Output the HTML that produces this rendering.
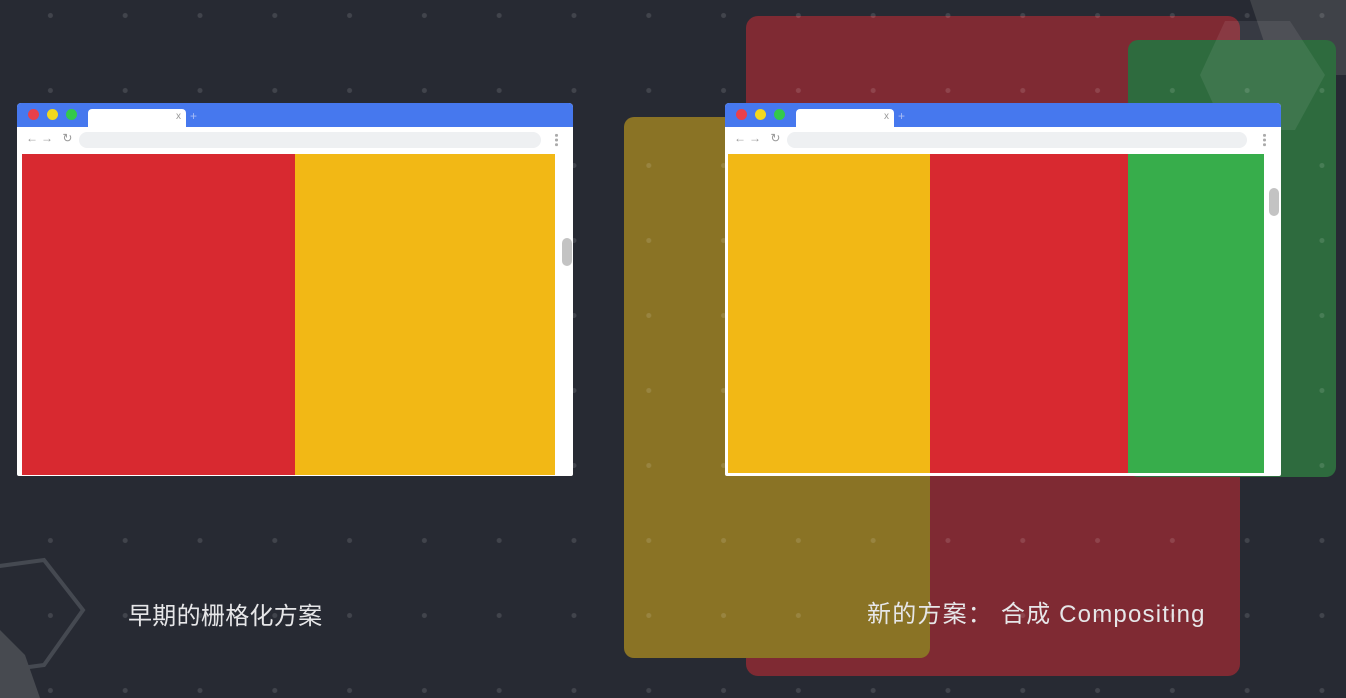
<!DOCTYPE html>
<html><head><meta charset="utf-8"><style>
*{margin:0;padding:0;box-sizing:border-box}
body{width:1346px;height:698px;overflow:hidden;background:#272a33;position:relative;font-family:"Liberation Sans","Noto Sans CJK SC",sans-serif}
.abs{position:absolute}
.dots{position:absolute;inset:0;background-image:radial-gradient(circle,rgba(255,255,255,0.12) 2.2px,transparent 2.8px);background-size:74.8px 75px;background-position:13px -22px}
.br{position:absolute;background:#fff;border-radius:4px 4px 2px 2px;overflow:hidden}
.tb{position:absolute;left:0;right:0;top:0;height:24px;background:#4678ee}
.dot{position:absolute;top:6px;width:11px;height:11px;border-radius:50%}
.tab{position:absolute;left:71px;top:6px;width:98px;height:20px;background:#fff;border-radius:4px 4px 0 0}
.tab span{position:absolute;right:5px;top:2px;font-size:10px;color:#999}
.plus{position:absolute;left:173px;top:6px;font-size:12px;color:#a8bdf5}
.url{position:absolute;left:62px;top:29px;height:16px;border-radius:8px;background:#eef0f2}
.nav{position:absolute;left:9px;top:28px;font-size:12px;color:#999;letter-spacing:3px}
.menu{position:absolute;top:30px;width:3px;height:14px;background:radial-gradient(circle,#aaa 1.4px,transparent 1.6px);background-size:3px 4.7px}
.thumb{position:absolute;width:10px;height:28px;background:#c3c3c3;border-radius:5px}
.lbl{position:absolute;color:#e6e6e8;font-size:24px}
</style></head><body>
<svg class="abs" style="left:0;top:0" width="1346" height="698">
<polygon points="-30,570 44,560 83,610 44,665 -30,675" fill="none" stroke="#454951" stroke-width="4"/>
<polygon points="-40,590 25,655 40,698 -40,698" fill="#474a50"/>
<polygon points="1250,0 1346,0 1346,75 1275,75" fill="#3f4248"/>
</svg>
<div class="abs" style="left:746px;top:16px;width:494px;height:660px;background:#7f2a33;border-radius:12px"></div>
<div class="abs" style="left:624px;top:117px;width:306px;height:541px;background:#8a7325;border-radius:10px"></div>
<div class="abs" style="left:1128px;top:40px;width:208px;height:437px;background:#2e6b3e;border-radius:10px"></div>
<svg class="abs" style="left:0;top:0" width="1346" height="698">
<polygon points="1225,21 1290,21 1325,75 1295,130 1225,130 1200,75" fill="rgba(255,255,255,0.08)"/>
</svg>
<div class="dots"></div>

<div class="br" style="left:17px;top:103px;width:556px;height:373px">
 <div class="tb"></div>
 <div class="dot" style="left:11px;background:#e9404b"></div>
 <div class="dot" style="left:30px;background:#f2d81d"></div>
 <div class="dot" style="left:49px;background:#33c94a"></div>
 <div class="tab"><span>x</span></div><div class="plus">+</div>
 <div class="nav">←→ ↻</div>
 <div class="url" style="width:462px"></div>
 <div class="menu" style="left:538px"></div>
 <div class="abs" style="left:5px;top:51px;width:273px;height:321px;background:#d82930"></div>
 <div class="abs" style="left:278px;top:51px;width:260px;height:321px;background:#f2b815"></div>
 <div class="thumb" style="left:545px;top:135px"></div>
</div>

<div class="br" style="left:725px;top:103px;width:556px;height:373px">
 <div class="tb"></div>
 <div class="dot" style="left:11px;background:#e9404b"></div>
 <div class="dot" style="left:30px;background:#f2d81d"></div>
 <div class="dot" style="left:49px;background:#33c94a"></div>
 <div class="tab"><span>x</span></div><div class="plus">+</div>
 <div class="nav">←→ ↻</div>
 <div class="url" style="width:460px"></div>
 <div class="menu" style="left:538px"></div>
 <div class="abs" style="left:3px;top:51px;width:202px;height:319px;background:#f2b815"></div>
 <div class="abs" style="left:205px;top:51px;width:198px;height:319px;background:#d82930"></div>
 <div class="abs" style="left:403px;top:51px;width:136px;height:319px;background:#37ad4b"></div>
 <div class="thumb" style="left:544px;top:85px"></div>
</div>

<div class="lbl" style="left:128px;top:596px;letter-spacing:0.3px">早期的栅格化方案</div>
<div class="lbl" style="left:867px;top:594px;letter-spacing:1.2px">新的方案： 合成 Compositing</div>
</body></html>
